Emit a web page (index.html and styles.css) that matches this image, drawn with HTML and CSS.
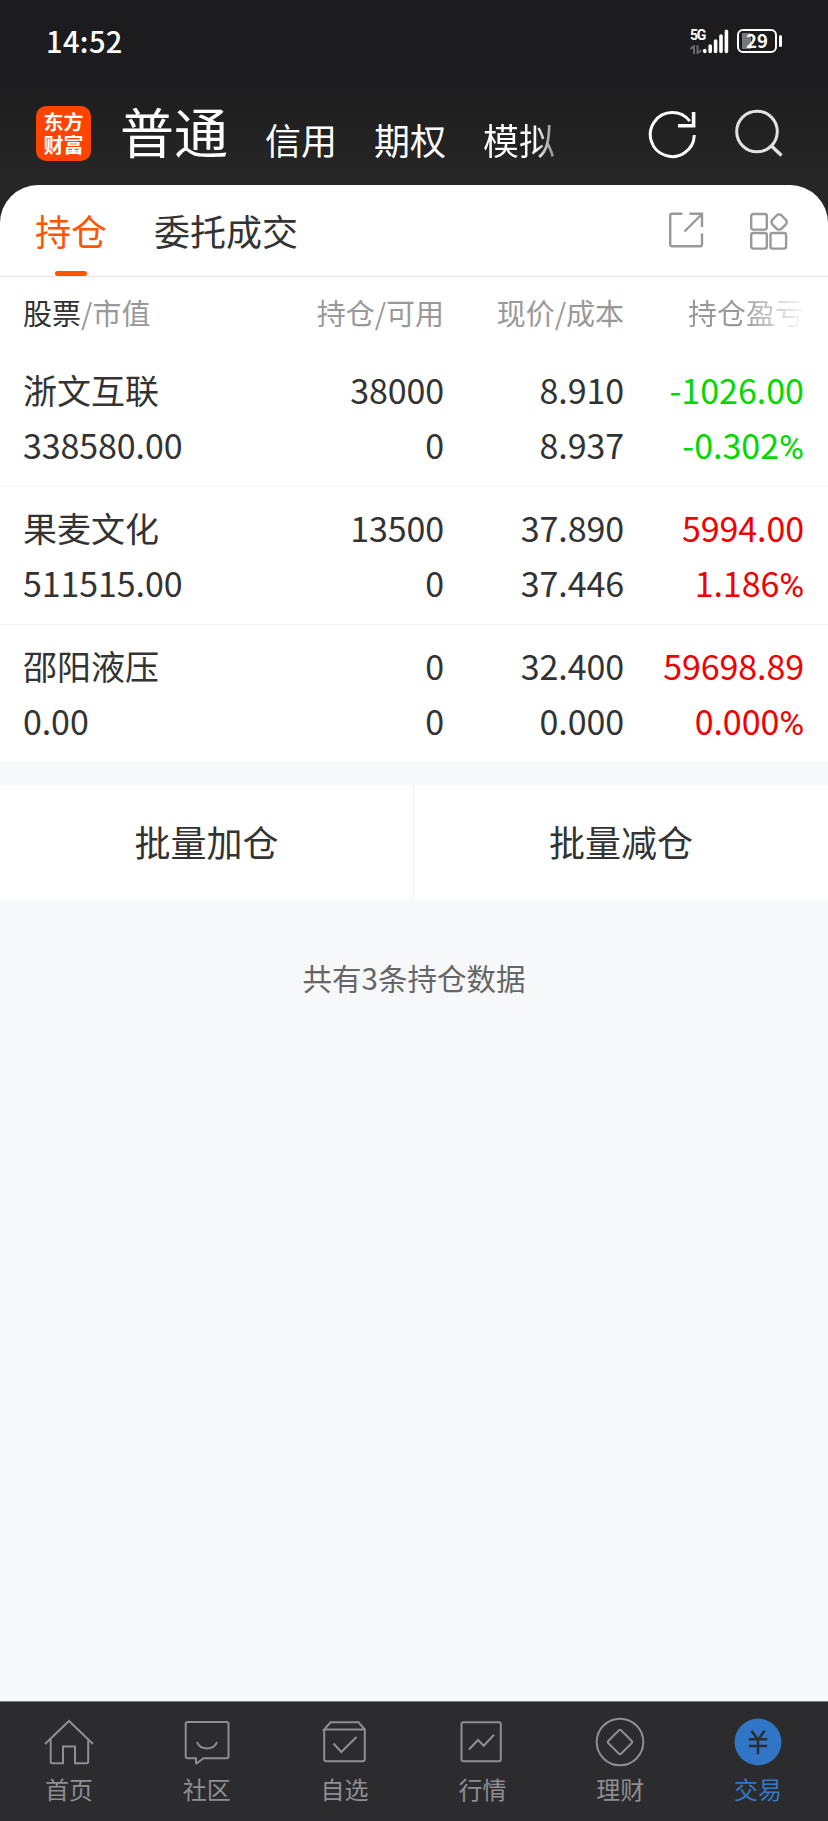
FILE: index.html
```
<!DOCTYPE html>
<html lang="zh-CN">
  <head>
    <meta charset="UTF-8" />
    <meta name="viewport" content="width=device-width, initial-scale=1.0" />
    <title>持仓</title>
    <link rel="stylesheet" href="styles.css">
  </head>
  <body>
    <header class="top">
      <div class="status-bar">
        <span class="time">14:52</span>
        <div class="status-icons">
          <div class="network">
            <span>5G</span>
            <svg width="12" height="9" viewBox="0 0 12 9" fill="none" stroke="#6b6b6d" stroke-width="2">
              <path d="M0.5 4 L4 1 V9 M7.5 0 V8 L11.5 5" />
            </svg>
          </div>
          <svg class="signal" width="26" height="25" viewBox="0 0 26 25" stroke="#fff" stroke-width="3.6" stroke-linecap="round">
            <path d="M1.8 21.6 V22.4 M7.2 17 V22.4 M12.6 12 V22.4 M18 7 V22.4 M23.4 2.4 V22.4" />
          </svg>
          <div class="battery"><span>29</span></div>
          <i class="battery-tip"></i>
        </div>
      </div>

      <div class="nav">
        <div class="logo"><span>东方</span><span>财富</span></div>
        <div class="accounts">
          <a class="current">普通</a>
          <a>信用</a>
          <a>期权</a>
          <a class="faded">模拟</a>
        </div>
        <svg class="refresh" width="50" height="50" viewBox="0 0 50 50" fill="none" stroke="#fff" stroke-width="3">
          <path d="M47.3 26 A22 22 0 1 1 42.8 12.2" />
          <path d="M46.6 3 V16.8 H31" stroke-width="3.6" />
        </svg>
        <svg class="search" width="50" height="50" viewBox="0 0 50 50" fill="none" stroke="#e2e2e2" stroke-width="3">
          <circle cx="23" cy="22.5" r="20.3" />
          <path d="M37.5 37 L47.5 46.5" stroke-width="3.4" />
        </svg>
      </div>
    </header>

    <main class="sheet">
      <div class="tabs">
        <a class="tab active">持仓</a>
        <a class="tab">委托成交</a>
        <svg class="share" width="38" height="38" viewBox="0 0 38 38" fill="none" stroke="#999" stroke-width="2.4">
          <path d="M15.5 2.8 H5 Q3.2 2.8 3.2 4.5 V33.5 Q3.2 35.3 5 35.3 H33.2 Q35 35.3 35 33.5 V22.5" />
          <path d="M22.5 2.8 H35 V16 M34.5 3.5 L17.5 20.5" />
        </svg>
        <svg class="apps" width="40" height="40" viewBox="0 0 40 40" fill="none" stroke="#999" stroke-width="2.4">
          <rect x="2.2" y="3" width="15.6" height="15.6" rx="2" />
          <rect x="2.2" y="22" width="15.6" height="15.6" rx="2" />
          <rect x="21.5" y="22" width="15.6" height="15.6" rx="2" />
          <rect x="23.7" y="4.7" width="12.8" height="12.8" rx="3.5" transform="rotate(45 30.1 11.1)" />
        </svg>
      </div>

      <div class="row head">
        <div><b>股票</b>/市值</div>
        <div>持仓/可用</div>
        <div>现价/成本</div>
        <div class="faded">持仓盈亏</div>
      </div>

      <div class="row">
        <div>浙文互联<br><span>338580.00</span></div>
        <div><span>38000</span><br>0</div>
        <div><span>8.910</span><br><span>8.937</span></div>
        <div class="down">-1026.00<br>-0.302<i>%</i></div>
      </div>
      <div class="row">
        <div>果麦文化<br><span>511515.00</span></div>
        <div><span>13500</span><br>0</div>
        <div><span>37.890</span><br><span>37.446</span></div>
        <div class="up"><span>5994.00</span><br><span>1.186<i>%</i></span></div>
      </div>
      <div class="row">
        <div>邵阳液压<br><span>0.00</span></div>
        <div>0<br>0</div>
        <div><span>32.400</span><br><span>0.000</span></div>
        <div class="up"><span>59698.89</span><br><span>0.000<i>%</i></span></div>
      </div>
    </main>

    <div class="batch">
      <button>批量加仓</button>
      <button>批量减仓</button>
    </div>
    <p class="total">共有3条持仓数据</p>

    <footer class="tabbar">
      <a>
        <svg viewBox="0 0 52 52">
          <path d="M2 28 L26 5 L50 28 M7.7 23.5 V46 Q7.7 47.2 9 47.2 H20 V30.5 H32 V47.2 H44 Q45.2 47.2 45.2 46 V23.5" />
        </svg>
        首页
      </a>
      <a>
        <svg viewBox="0 0 52 52">
          <path d="M6.5 6 H45.5 Q47.5 6 47.5 8 V40.5 Q47.5 42.3 45.5 42.3 H22.5 L16 47.3 Q15 48 15 46.5 V42.3 H6.5 Q4.7 42.3 4.7 40.5 V8 Q4.7 6 6.5 6 Z" />
          <path d="M16 26 C19 34.5 33 34.5 36 26" />
        </svg>
        社区
      </a>
      <a>
        <svg viewBox="0 0 52 52">
          <path d="M5.2 13.5 V43 Q5.2 45.2 7.4 45.2 H43.6 Q45.8 45.2 45.8 43 V13.5 L39.5 6.3 H11.5 L5.2 13.5 H45.8 M14.5 27.5 L22.3 36 L37.5 21" />
        </svg>
        自选
      </a>
      <a>
        <svg viewBox="0 0 52 52">
          <rect x="5.5" y="6.3" width="39.3" height="38.9" rx="2" />
          <path d="M13 33.5 L22 24 L27.8 29.7 L38 18.8" />
        </svg>
        行情
      </a>
      <a>
        <svg viewBox="0 0 52 52">
          <circle cx="26" cy="26" r="23.3" />
          <path d="M25 14.3 Q26 13.3 27 14.3 L37.8 25 Q38.8 26 37.8 27 L27 37.7 Q26 38.7 25 37.7 L14.2 27 Q13.2 26 14.2 25 Z" />
        </svg>
        理财
      </a>
      <a class="active">
        <svg viewBox="0 0 52 52">
          <circle class="disc" cx="26" cy="26" r="23.4" />
          <path class="yen" d="M19.5 14.8 L26 24 L32.5 14.8 M26 23 V38.2 M16.8 23.2 H35.2 M16.8 30 H35.2" />
        </svg>
        交易
      </a>
    </footer>
  </body>
</html>
```
FILE: styles.css
```
* {
  box-sizing: border-box;
}
body {
  display: flex;
  flex-direction: column;
  height: 1821px;
  margin: 0;
  background: #f6f8fa;
  color: #333;
  font-family: "Noto Sans CJK SC", sans-serif;
}
.top {
  height: 223px;
  margin-bottom: -38px;
  background: linear-gradient(#1c1c1e 75px, #262626 175px);
  color: #fff;
}
.status-bar {
  display: flex;
  justify-content: space-between;
  height: 82px;
  padding: 0 46px 0 46px;
}
.time {
  font-size: 29px;
  font-weight: 500;
  line-height: 81px;
  letter-spacing: 0.4px;
}
.status-icons {
  display: flex;
  height: 25px;
  margin-top: 29px;
}
.network {
  width: 13px;
  font: bold 14px/13px Roboto, sans-serif;
  letter-spacing: -1.4px;
}
.network svg {
  display: block;
  margin-top: 3px;
}
.battery {
  width: 40px;
  height: 24px;
  margin-left: 8px;
  border: 2px solid #fff;
  border-radius: 6px;
  background: linear-gradient(90deg, #777 9px, transparent 9px) 3px 2px / 32px 16px no-repeat;
  font: bold 18.5px/19px "Noto Sans CJK SC", sans-serif;
  text-align: center;
}
.battery-tip {
  width: 3px;
  height: 12px;
  margin: 6px 0 0 2px;
  border-radius: 2px;
  background: #fff;
}
.nav {
  display: flex;
  height: 103px;
  padding-left: 36px;
}
.logo {
  width: 55px;
  height: 55px;
  margin-top: 24px;
  padding-top: 4px;
  border-radius: 10px;
  background: #ff4400;
  font-size: 20px;
  font-weight: 700;
  line-height: 23px;
  text-align: center;
}
.logo span {
  display: block;
}
.accounts {
  display: flex;
  align-items: baseline;
  gap: 37px;
  width: 525px;
  margin-left: 29px;
  font-size: 36px;
  line-height: 98px;
}
.accounts a {
  transform: translateY(1px);
}
.accounts .current {
  font-size: 54px;
  transform: none;
}
.accounts .faded {
  background: linear-gradient(90deg, #fff 52px, #777 74px);
  background-clip: text;
  -webkit-background-clip: text;
  color: transparent;
}
.refresh {
  margin: 27px 0 0 2px;
}
.search {
  margin: 27px 0 0 37px;
}
.sheet {
  border-radius: 38px 38px 0 0;
  background: #fff;
}
.tabs {
  display: flex;
  height: 92px;
  padding: 0 39px 0 35px;
  border-bottom: 1px solid #e6e6e6;
}
.tab {
  height: 91px;
  margin-right: 47px;
  font-size: 36px;
  line-height: 90px;
}
.tab.active {
  position: relative;
  color: #ff5500;
}
.tab.active::after {
  content: "";
  position: absolute;
  bottom: 0;
  left: 20px;
  width: 32px;
  height: 5px;
  border-radius: 3px;
  background: #ff5500;
}
.share {
  margin: 26px 44px 0 auto;
}
.apps {
  margin-top: 26px;
}
.row {
  display: grid;
  grid-template-columns: 1fr 180px 180px 180px;
  height: 138px;
  padding: 13px 24px 0 23px;
  border-bottom: 1px solid #f2f3f5;
  font-size: 34px;
  line-height: 55px;
  text-align: right;
}
.row div:first-child {
  text-align: left;
}
.row span {
  letter-spacing: -0.1px;
}
/* narrower percent sign, sits on the same line box */
.row i {
  font-family: Roboto, sans-serif;
  font-style: normal;
  line-height: 1;
}
.row.head {
  height: 72px;
  padding-top: 0;
  border: none;
  color: #999;
  font-size: 29px;
  line-height: 71px;
}
.head b {
  color: #333;
  font-weight: 400;
}
.head .faded {
  background: linear-gradient(90deg, #999 118px, #fff 182px);
  background-clip: text;
  -webkit-background-clip: text;
  color: transparent;
}
.up {
  color: #f00000;
}
.down {
  color: #00d900;
}
.batch {
  display: flex;
  height: 114px;
  margin-top: 22px;
  background: #fff;
}
.batch button {
  width: 413px;
  padding: 0 0 3px;
  border: none;
  background: none;
  color: #333;
  font: 36px "Noto Sans CJK SC", sans-serif;
}
.batch button + button {
  width: 415px;
  border-left: 1px solid #f0f1f3;
}
.total {
  margin: 56px 0 0;
  color: #666;
  font-size: 29.5px;
  line-height: 44px;
  text-align: center;
}
.tabbar {
  display: flex;
  height: 120px;
  margin-top: auto;
  padding: 14px 1px 0 0;
  border-top: 1px solid #77787a;
  background: #2c2c2e;
}
.tabbar a {
  flex: 1;
  color: #8e8e93;
  font-size: 24px;
  line-height: 42px;
  text-align: center;
}
.tabbar svg {
  display: block;
  width: 52px;
  height: 52px;
  margin: 0 auto;
  fill: none;
  stroke: #8e8e93;
  stroke-width: 2;
}
.tabbar .active {
  color: #3478c8;
}
.tabbar .disc {
  fill: #3176c6;
  stroke: none;
}
.tabbar .yen {
  stroke: #2c2c2e;
  stroke-width: 2.4;
}
```
